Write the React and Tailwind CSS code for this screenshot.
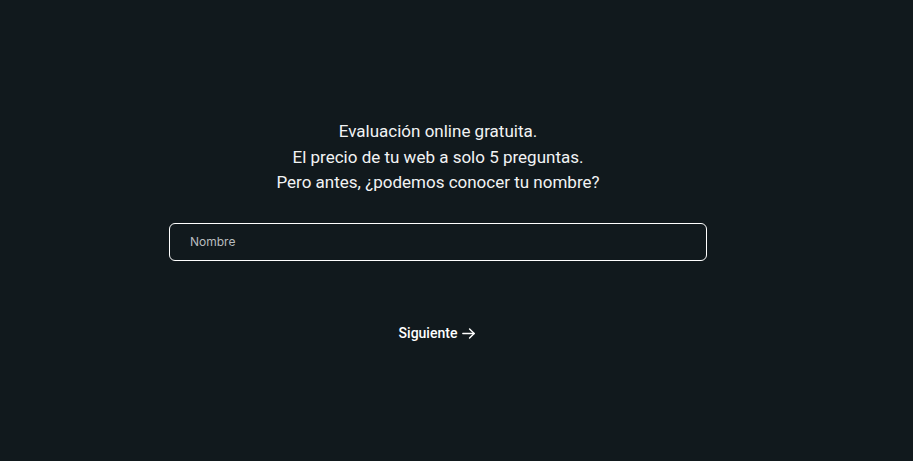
export default function App() {
  return (
    <div className="min-h-screen w-full bg-[#11191d] flex flex-col items-center pr-[37px] pt-[119px]" style={{ fontFamily: 'Roboto, "Liberation Sans", sans-serif' }}>
      <div className="text-center text-[17px] leading-[25.5px] text-[#f1f3f4]">
        <p>Evaluación online gratuita.</p>
        <p>El precio de tu web a solo 5 preguntas.</p>
        <p>Pero antes, ¿podemos conocer tu nombre?</p>
      </div>
      <input
        type="text"
        placeholder="Nombre"
        className="mt-[27px] w-[538px] h-[38px] rounded-[6px] border border-white bg-transparent px-[20px] text-[12px] text-white placeholder:text-[#b8bcbf] outline-none"
        style={{ fontFamily: 'Inter, "Liberation Sans", sans-serif' }}
      />
      <button className="mt-[62px] flex items-center gap-[3px] text-[14px] font-medium text-white">
        Siguiente
        <svg width="17" height="17" viewBox="0 0 24 24" fill="none" stroke="currentColor" strokeWidth="2" strokeLinecap="round" strokeLinejoin="round">
          <path d="M4 12h16" />
          <path d="M13.5 5.5L20 12l-6.5 6.5" />
        </svg>
      </button>
    </div>
  );
}
